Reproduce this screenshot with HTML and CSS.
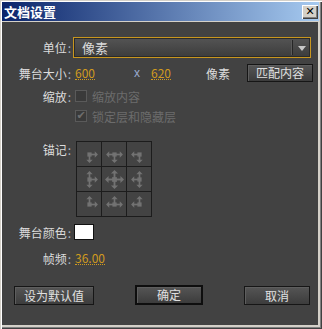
FILE: index.html
```html
<!DOCTYPE html>
<html lang="zh-CN">
<head>
    <meta charset="UTF-8">
    <title>文档设置</title>
    <link rel="stylesheet" href="styles.css">
</head>
<body>
    <svg class="defs" width="0" height="0">
        <defs>
            <g id="ar">
                <rect x="9" y="7.2" width="5.5" height="1.6"/>
                <polygon points="13,5 16,8 13,11"/>
            </g>
        </defs>
    </svg>
    <div class="window">
        <div class="titlebar">
            <span class="title">文档设置</span>
            <span class="close">✕</span>
        </div>
        <div class="dialog">
            <div class="row unit-row">
                <span class="lbl">单位<i>:</i></span>
                <div class="select">
                    <span class="select-text">像素</span>
                    <span class="select-arrow"></span>
                </div>
            </div>
            <div class="row size-row">
                <span class="lbl">舞台大小<i>:</i></span>
                <span class="num w1">600</span>
                <span class="times">x</span>
                <span class="num w2">620</span>
                <span class="unit">像素</span>
                <button class="btn match">匹配内容</button>
            </div>
            <div class="row check-row">
                <span class="lbl">缩放<i>:</i></span>
                <span class="check"></span>
                <span class="dim">缩放内容</span>
            </div>
            <div class="row check-row2">
                <span class="lbl"></span>
                <span class="check on">✔</span>
                <span class="dim">锁定层和隐藏层</span>
            </div>
            <div class="row anchor-row">
                <span class="lbl anchor-lbl">锚记<i>:</i></span>
                <div class="anchors">
                    <div class="cell"><svg viewBox="-1 -1 18 18"><rect x="6" y="6" width="4" height="4"/><use href="#ar"/><use href="#ar" transform="rotate(90 8 8)"/></svg></div>
                    <div class="cell"><svg viewBox="0 -1 16 18"><rect x="6" y="6" width="4" height="4"/><use href="#ar"/><use href="#ar" transform="rotate(90 8 8)"/><use href="#ar" transform="rotate(180 8 8)"/></svg></div>
                    <div class="cell"><svg viewBox="-1 -1 18 18"><rect x="6" y="6" width="4" height="4"/><use href="#ar" transform="rotate(90 8 8)"/><use href="#ar" transform="rotate(180 8 8)"/></svg></div>
                    <div class="cell"><svg viewBox="-1 0 18 16"><rect x="6" y="6" width="4" height="4"/><use href="#ar"/><use href="#ar" transform="rotate(90 8 8)"/><use href="#ar" transform="rotate(270 8 8)"/></svg></div>
                    <div class="cell"><svg viewBox="0 0 16 16"><rect x="6" y="6" width="4" height="4"/><use href="#ar"/><use href="#ar" transform="rotate(90 8 8)"/><use href="#ar" transform="rotate(180 8 8)"/><use href="#ar" transform="rotate(270 8 8)"/></svg></div>
                    <div class="cell"><svg viewBox="-1 0 18 16"><rect x="6" y="6" width="4" height="4"/><use href="#ar" transform="rotate(90 8 8)"/><use href="#ar" transform="rotate(180 8 8)"/><use href="#ar" transform="rotate(270 8 8)"/></svg></div>
                    <div class="cell"><svg viewBox="-1 -1 18 18"><rect x="6" y="6" width="4" height="4"/><use href="#ar"/><use href="#ar" transform="rotate(270 8 8)"/></svg></div>
                    <div class="cell"><svg viewBox="0 -1 16 18"><rect x="6" y="6" width="4" height="4"/><use href="#ar"/><use href="#ar" transform="rotate(180 8 8)"/><use href="#ar" transform="rotate(270 8 8)"/></svg></div>
                    <div class="cell"><svg viewBox="-1 -1 18 18"><rect x="6" y="6" width="4" height="4"/><use href="#ar" transform="rotate(180 8 8)"/><use href="#ar" transform="rotate(270 8 8)"/></svg></div>
                </div>
            </div>
            <div class="row color-row">
                <span class="lbl">舞台颜色<i>:</i></span>
                <span class="swatch"></span>
            </div>
            <div class="row fps-row">
                <span class="lbl">帧频<i>:</i></span>
                <span class="num">36.00</span>
            </div>
            <div class="buttons">
                <button class="btn btn-default">设为默认值</button>
                <button class="btn btn-ok">确定</button>
                <button class="btn btn-cancel">取消</button>
            </div>
        </div>
    </div>
</body>
</html>
```

FILE: styles.css
```css
body {
    margin: 0;
    font-family: "Noto Sans CJK SC", "Liberation Sans", sans-serif;
    font-size: 12px;
    background: #d4d0c8;
}
.defs {
    position: absolute;
}
.window {
    width: 322px;
    height: 329px;
    box-sizing: border-box;
    background: #d4d0c8;
    padding: 2px 3px 3px 2px;
    display: flex;
    flex-direction: column;
    box-shadow: inset 1px 1px 0 #d4d0c8, inset 2px 2px 0 #fff, inset -1px -1px 0 #404040, inset -2px -2px 0 #808080;
}
.titlebar {
    height: 19px;
    display: flex;
    align-items: center;
    justify-content: space-between;
    padding: 0 1px 0 2px;
    background: linear-gradient(90deg, #0a246a, #a6caf0);
}
.title {
    color: #fff;
    font-weight: bold;
    font-size: 13px;
}
.close {
    width: 16px;
    height: 14px;
    box-sizing: border-box;
    background: #d4d0c8;
    color: #000;
    font-size: 11px;
    font-weight: bold;
    line-height: 13px;
    text-align: center;
    font-family: "DejaVu Sans", sans-serif;
    box-shadow: inset 1px 1px 0 #fff, inset -1px -1px 0 #404040, inset -2px -2px 0 #808080;
}
.dialog {
    flex: 1;
    margin-top: 1px;
    background: #424242;
    color: #dcdcdc;
    padding-top: 15px;
    padding-left: 1px;
    box-shadow: inset -1px -1px 0 #d4d0c8;
}
.row {
    display: flex;
    align-items: center;
}
.lbl {
    width: 68px;
    text-align: right;
    flex-shrink: 0;
}
.lbl i {
    font-style: normal;
    color: #a8b4c4;
    padding-left: 1px;
}
.unit-row {
    height: 21px;
}
.select {
    width: 238px;
    height: 21px;
    box-sizing: border-box;
    margin-left: 2px;
    border: 1px solid #c8961e;
    background: linear-gradient(180deg, #545454, #3c3c3c);
    box-shadow: inset 0 0 0 1px #2a2a2a;
    display: flex;
    align-items: center;
}
.select-text {
    flex: 1;
    padding-left: 8px;
    font-size: 13px;
}
.select-arrow {
    width: 17px;
    height: 15px;
    border-left: 1px solid #262626;
    box-shadow: -1px 0 0 #5a5a5a;
    position: relative;
}
.select-arrow::after {
    content: "";
    position: absolute;
    left: 5px;
    top: 6px;
    border-left: 4px solid transparent;
    border-right: 4px solid transparent;
    border-top: 5px solid #c8c8c8;
}
.size-row {
    margin-top: 6px;
    height: 18px;
}
.num {
    color: #d09a1e;
    margin-left: 4px;
    border-bottom: 1px dotted #d09a1e;
    line-height: 13px;
}
.w1 {
    margin-right: 39px;
}
.times {
    color: #9aacd0;
    font-family: "Liberation Sans", sans-serif;
    width: 17px;
}
.w2 {
    margin-left: 0;
    margin-right: 35px;
}
.unit {
    width: 41px;
}
.btn {
    font-family: inherit;
    font-size: 12px;
    color: #e0e0e0;
    background: linear-gradient(180deg, #555, #3c3c3c);
    border: 1px solid #161616;
    box-shadow: inset 1px 1px 0 #5e5e5e;
    padding: 0;
    height: 18px;
    line-height: 14px;
}
.match {
    width: 66px;
}
.check-row {
    margin-top: 7px;
    height: 14px;
}
.check-row2 {
    margin-top: 6px;
    height: 14px;
}
.check {
    width: 12px;
    height: 12px;
    box-sizing: border-box;
    margin-left: 4px;
    margin-right: 5px;
    border: 1px solid #5a5a5a;
    background: #3a3a3a;
    color: #6e6e6e;
    font-size: 11px;
    line-height: 10px;
    text-align: center;
    font-family: "DejaVu Sans", sans-serif;
}
.dim {
    color: #6c6c6c;
}
.anchor-row {
    margin-top: 18px;
    align-items: flex-start;
}
.anchors {
    margin-left: 5px;
    display: grid;
    grid-template-columns: repeat(3, 24px);
    grid-template-rows: repeat(3, 24px);
    gap: 1px;
    background: #1c1c1c;
    border: 1px solid #1c1c1c;
}
.cell {
    background: #434343;
    display: flex;
    align-items: center;
    justify-content: center;
}
.cell svg {
    width: 19px;
    height: 19px;
    fill: #727272;
}
.color-row {
    margin-top: 7px;
    height: 16px;
}
.swatch {
    width: 20px;
    height: 16px;
    box-sizing: border-box;
    margin-left: 3px;
    background: #fff;
    border: 1px solid #111;
}
.fps-row {
    margin-top: 11px;
    height: 14px;
}
.buttons {
    margin-top: 21px;
    display: flex;
    padding-left: 11px;
}
.btn-default {
    width: 80px;
    height: 19px;
}
.btn-ok {
    width: 68px;
    height: 20px;
    margin-left: 41px;
    border: 2px solid #0e0e0e;
    margin-top: -1px;
}
.btn-cancel {
    width: 66px;
    height: 19px;
    margin-left: 41px;
}
```
